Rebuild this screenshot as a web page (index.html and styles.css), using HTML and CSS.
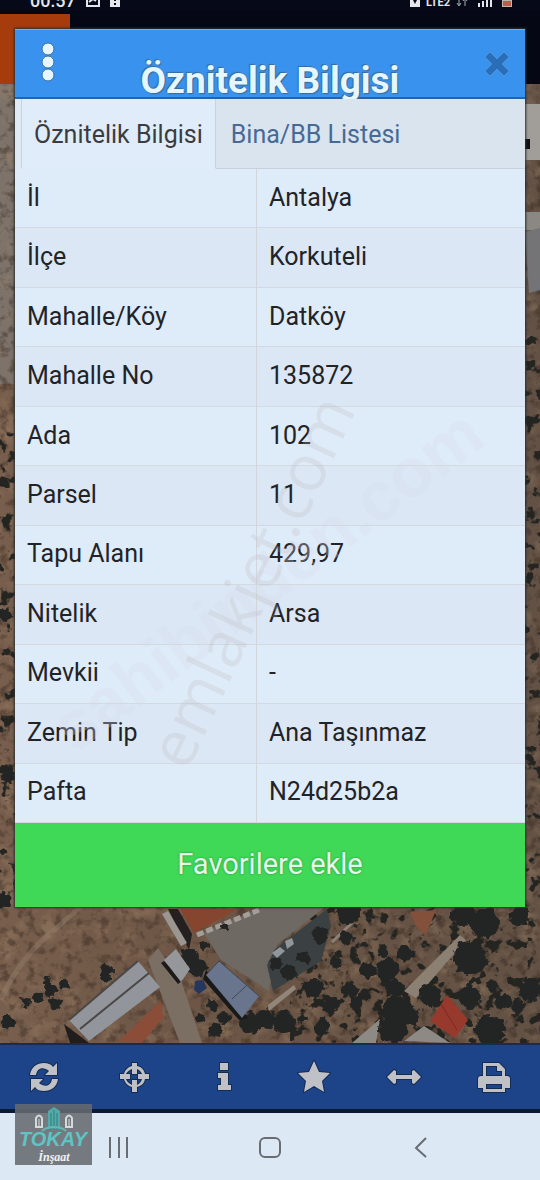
FILE: index.html
```html
<!DOCTYPE html>
<html lang="tr">
<head>
    <meta charset="UTF-8">
    <meta name="viewport" content="width=device-width, initial-scale=1">
    <title>Öznitelik Bilgisi</title>
    <link rel="stylesheet" href="styles.css">
</head>
<body>
    <div class="status-bar">
        <span class="clock">00:57</span>
        <svg class="status-icon" width="14" height="14" viewBox="0 0 14 14"><path d="M1 1h12v12H1zM3 9l4-3 3 2" fill="none" stroke="#e4e6ea" stroke-width="2"/></svg>
        <svg class="status-icon" width="10" height="14" viewBox="0 0 10 14"><path d="M0 0h10v14H0z" fill="#e4e6ea"/><path d="M4 3h2v5H4zM4 10h2v2H4z" fill="#060a18"/></svg>
        <span class="status-space"></span>
        <svg class="status-icon" width="10" height="14" viewBox="0 0 10 14"><path d="M0 0h10v14H0z" fill="#e4e6ea"/><path d="M3 7h4L5 11z" fill="#060a18"/></svg>
        <span class="network">LTE2</span>
        <svg class="status-icon" width="12" height="12" viewBox="0 0 12 12"><path d="M3 2v8M1 8l2 3 2-3M9 11V4M7 6l2-3 2 3" fill="none" stroke="#a9acb4"/></svg>
        <svg class="status-icon" width="14" height="12" viewBox="0 0 14 12"><path d="M1 8v4M5 6v6M9 3v9M13 0v12" stroke="#e4e6ea" stroke-width="2"/></svg>
        <svg class="status-icon" width="10" height="14" viewBox="0 0 10 14"><path d="M0 0h10v14H0z" fill="#c5b5b0"/><path d="M1 8h8v5H1z" fill="#b8614a"/></svg>
    </div>

    <main class="map">
        <svg class="map-image" viewBox="0 10 540 1033" preserveAspectRatio="xMidYMin slice" aria-hidden="true">
            <defs>
                <linearGradient id="soil" x1="0" x2="1">
                    <stop offset="0" stop-color="#785f4d"/>
                    <stop offset=".35" stop-color="#6d5646"/>
                    <stop offset="1" stop-color="#625144"/>
                </linearGradient>
                <filter id="grain" x="0" y="0" width="1" height="1" color-interpolation-filters="sRGB">
                    <feTurbulence type="fractalNoise" baseFrequency=".11" numOctaves="4" seed="8"/>
                    <feColorMatrix values="0 0 0 0 .18  0 0 0 0 .13  0 0 0 0 .1  4 0 0 0 -2"/>
                </filter>
                <filter id="light" x="0" y="0" width="1" height="1" color-interpolation-filters="sRGB">
                    <feTurbulence type="fractalNoise" baseFrequency=".05" numOctaves="4" seed="21"/>
                    <feColorMatrix values="0 0 0 0 .64  0 0 0 0 .53  0 0 0 0 .42  3 0 0 0 -1.5"/>
                </filter>
                <filter id="bushes" x="0" y="0" width="1" height="1" color-interpolation-filters="sRGB">
                    <feTurbulence type="fractalNoise" baseFrequency=".08" numOctaves="3" seed="5"/>
                    <feColorMatrix values="0 0 0 0 .14  0 0 0 0 .14  0 0 0 0 .13  12 0 0 0 -7"/>
                </filter>
                <filter id="ragged" color-interpolation-filters="sRGB">
                    <feTurbulence type="fractalNoise" baseFrequency=".15" numOctaves="2" seed="3"/>
                    <feDisplacementMap in="SourceGraphic" scale="9" xChannelSelector="R" yChannelSelector="G"/>
                </filter>
            </defs>
            <rect y="10" width="540" height="1033" fill="url(#soil)"/>
            <path d="M0 84h15v300H0z" fill="#7d736a"/>
            <rect y="84" width="540" height="959" filter="url(#light)" opacity=".4"/>
            <rect y="84" width="540" height="959" filter="url(#grain)" opacity=".4"/>
            <rect y="430" width="18" height="477" filter="url(#bushes)"/>
            <rect x="522" y="330" width="18" height="577" filter="url(#bushes)"/>
            <rect x="290" y="907" width="250" height="136" filter="url(#bushes)"/>
            <path d="M525 104h15v56h-15z" fill="#a19d99"/>
            <path d="M525 139h5v10h-5z" fill="#101114"/>
            <path d="M525 212h15v18h-15z" fill="#8b8782"/>
            <path d="M525 232l15-4v62l-11 3z" fill="#747476"/>

            <!-- roads and yards -->
            <path d="M0 1000q20-40 45-62t35-31" fill="none" stroke="#94806c" stroke-width="5" opacity=".45"/>
            <path d="M148 960l10-12 24 35 20 60h-22z" fill="#7b6f64"/>
            <path d="M203 932l60-25h62l-48 38-8 46-48-31z" fill="#6e6963"/>
            <path d="M327 909l-52 40-8 16 6 26 48-30 10-35z" fill="#3b4142"/>
            <path d="M404 991l56-56 6 5-50 58z" fill="#8b8072"/>
            <path d="M268 1005l26-20 2 4-27 22z" fill="#918679"/>
            <path d="M352 1043l28-24-4 24zM404 1041l20-15 26 17z" fill="#8d8985"/>
            <path d="M197 935l62-25" stroke="#a49e98" stroke-width="5" stroke-dasharray="7 3"/>
            <path d="M332 942l21-20" stroke="#8e8176" stroke-width="3"/>

            <!-- trees -->
            <g fill="#222524" filter="url(#ragged)">
                <circle cx="50" cy="990" r="7"/><circle cx="55" cy="1003" r="6"/><circle cx="26" cy="1002" r="5"/>
                <circle cx="38" cy="998" r="5"/><circle cx="8" cy="1023" r="7"/><circle cx="107" cy="970" r="6"/>
                <circle cx="47" cy="982" r="4"/><circle cx="64" cy="984" r="5"/><circle cx="106" cy="978" r="5"/>
                <circle cx="190" cy="957" r="9"/><circle cx="198" cy="968" r="9"/><circle cx="212" cy="1006" r="6"/>
                <circle cx="200" cy="1018" r="5"/><circle cx="224" cy="1018" r="6"/><circle cx="216" cy="1030" r="7"/>
                <circle cx="250" cy="1023" r="11"/><circle cx="266" cy="1019" r="10"/><circle cx="225" cy="927" r="4"/>
                <circle cx="205" cy="946" r="4"/><circle cx="284" cy="1022" r="11"/><circle cx="313" cy="988" r="10"/>
                <circle cx="331" cy="1004" r="9"/><circle cx="350" cy="990" r="8"/><circle cx="368" cy="971" r="8"/>
                <circle cx="388" cy="969" r="11"/><circle cx="405" cy="953" r="8"/><circle cx="383" cy="951" r="6"/>
                <circle cx="394" cy="988" r="9"/><circle cx="396" cy="1011" r="15"/><circle cx="393" cy="1030" r="14"/>
                <circle cx="409" cy="1015" r="10"/><circle cx="430" cy="995" r="11"/><circle cx="470" cy="958" r="17"/>
                <circle cx="469" cy="997" r="11"/><circle cx="484" cy="923" r="15"/><circle cx="462" cy="914" r="12"/>
                <circle cx="490" cy="1030" r="15"/><circle cx="520" cy="916" r="10"/><circle cx="530" cy="990" r="11"/>
                <circle cx="503" cy="1002" r="8"/><circle cx="518" cy="1006" r="7"/><circle cx="492" cy="987" r="6"/>
                <circle cx="348" cy="912" r="12"/><circle cx="322" cy="1027" r="8"/><circle cx="337" cy="963" r="6"/>
                <circle cx="289" cy="972" r="8"/><circle cx="275" cy="963" r="7"/><circle cx="304" cy="958" r="7"/>
                <circle cx="320" cy="935" r="8"/><circle cx="346" cy="938" r="7"/><circle cx="302" cy="1018" r="5"/>
                <circle cx="356" cy="1003" r="7"/><circle cx="365" cy="995" r="6"/>
                <circle cx="5" cy="615" r="7"/><circle cx="9" cy="775" r="7"/><circle cx="3" cy="900" r="7"/>
            </g>

            <!-- roofs -->
            <path d="M168 909h10l14 25-3 16z" fill="#24201f"/>
            <path d="M162 914l6-3 19 32-6 3z" fill="#9b9691"/>
            <path d="M180 909h58l-44 24z" fill="#86452f"/>
            <path d="M64 1024l25 19h-19z" fill="#211d1c"/>
            <path d="M69 1020l69-59 22 26-71 54z" fill="#92959b"/>
            <path d="M69 1020l69-59M80 1029l69-56" fill="none" stroke="#4b4744" stroke-width="2"/>
            <path d="M119 1041l42-40 2 17-21 25z" fill="#8c4d38"/>
            <path d="M161 963l17 21 5-4-19-19z" fill="#1c1a19"/>
            <path d="M164 960l12-11 14 20-9 13z" fill="#96979a"/>
            <path d="M203 979l36 41 9-2-42-48z" fill="#191919"/>
            <path d="M206 975l13-14 40 35-17 22z" fill="#69758c"/>
            <path d="M206 975l13-14 40 35M232 999l14-13" fill="none" stroke="#3e4758"/>
            <path d="M195 981l8-1 4 8-8 6-5-4z" fill="#26375d"/>
            <path d="M430 1021l17-26 21 25-13 18z" fill="#97392d"/>
            <path d="M441 1004l16 26" stroke="#792b24"/>
            <path d="M410 912l26-2-10 25-10-9z" fill="#83503b"/>
            <path d="M272 953l8-6 5 4-8 7zM285 941l7-3 2 6-7 5z" fill="#90969b"/>

            <path d="M0 10h540v74H0z" fill="#050814"/>
            <path d="M0 14h70v70H0z" fill="#a63c0b"/>
        </svg>

        <section class="dialog">
            <header class="dialog-header">
                <button class="menu-button" type="button" aria-label="Menü">
                    <svg width="14" height="40" viewBox="0 0 14 40"><g fill="#e6f6ff" stroke="#396f9f"><circle cx="7" cy="7" r="6"/><circle cx="7" cy="20" r="6"/><circle cx="7" cy="33" r="6"/></g></svg>
                </button>
                <h1>Öznitelik Bilgisi</h1>
                <button class="close-button" type="button" aria-label="Kapat">
                    <svg width="28" height="28" viewBox="0 0 28 28"><path d="M2 7l5-5 7 7 7-7 5 5-7 7 7 7-5 5-7-7-7 7-5-5 7-7z" fill="#2a6db9" stroke="#4e92d3" stroke-linejoin="round"/></svg>
                </button>
            </header>

            <div class="tabs">
                <button class="tab active" type="button">Öznitelik Bilgisi</button>
                <button class="tab" type="button">Bina/BB Listesi</button>
            </div>

            <table class="details">
                <tr><th scope="row">İl</th><td>Antalya</td></tr>
                <tr><th scope="row">İlçe</th><td>Korkuteli</td></tr>
                <tr><th scope="row">Mahalle/Köy</th><td>Datköy</td></tr>
                <tr><th scope="row">Mahalle No</th><td>135872</td></tr>
                <tr><th scope="row">Ada</th><td>102</td></tr>
                <tr><th scope="row">Parsel</th><td>11</td></tr>
                <tr><th scope="row">Tapu Alanı</th><td>429,97</td></tr>
                <tr><th scope="row">Nitelik</th><td>Arsa</td></tr>
                <tr><th scope="row">Mevkii</th><td>-</td></tr>
                <tr><th scope="row">Zemin Tip</th><td>Ana Taşınmaz</td></tr>
                <tr><th scope="row">Pafta</th><td>N24d25b2a</td></tr>
            </table>

            <button class="favorite-button" type="button">Favorilere ekle</button>

            <svg class="watermark" viewBox="0 0 510 878">
                <text class="mark-wide" transform="translate(266 570) rotate(-37)">sahibinden.com</text>
                <text class="mark-tall" transform="translate(257 562) rotate(-65)">emlakjet.com</text>
            </svg>
        </section>
    </main>

    <nav class="toolbar">
        <button type="button" aria-label="Yenile">
            <svg width="36" height="36" viewBox="0 0 36 36"><path d="M4 16C5 8 11 4 18 4c4 0 7 1 9 4l4-4v12H19l4-4c-6-5-12-3-13 4zM32 20c-1 8-7 12-14 12-4 0-7-1-9-4l-4 4V20h12l-4 4c6 5 12 3 13-4z"/></svg>
        </button>
        <button type="button" aria-label="Konum">
            <svg width="36" height="36" viewBox="0 0 36 36"><path fill-rule="evenodd" d="M16 4h5v3c5 1 7 4 8 8h4v5h-4c-1 5-4 7-8 8v5h-5v-5c-4-1-7-4-8-8H4v-5h4c1-4 4-7 8-8zM16 10c-3 1-5 3-6 5h4v5h-4c1 3 3 4 6 6v-5h5v5c3-2 4-3 5-6h-4v-5h4c-1-2-2-4-5-5v5h-5z"/></svg>
        </button>
        <button type="button" aria-label="Bilgi">
            <svg width="36" height="36" viewBox="0 0 36 36"><path d="M14 4h8v7h-8zM12 14h10v12h3v5H12v-5h3v-7h-3z"/></svg>
        </button>
        <button type="button" aria-label="Favoriler">
            <svg width="36" height="36" viewBox="0 0 36 36"><path d="M18 2l5 11 11 1-8 8 2 11-10-6-10 6 2-11-8-8 11-1z"/></svg>
        </button>
        <button type="button" aria-label="Ölç">
            <svg width="38" height="36" viewBox="0 0 38 36"><path d="M2 18l7-7 2 1v4h16v-4l2-1 7 7-7 7-2-1v-4H11v4l-2 1z"/></svg>
        </button>
        <button type="button" aria-label="Yazdır">
            <svg width="36" height="36" viewBox="0 0 36 36"><path fill-rule="evenodd" d="M7 4h16l6 6v7h2c2 0 3 1 3 3v9h-5v4H7v-4H2v-9c0-2 1-3 3-3h2zM10 7v10h16v-5h-5V7zM10 25v5h16v-5z"/></svg>
        </button>
    </nav>

    <nav class="system-nav">
        <button type="button" aria-label="Son uygulamalar">
            <svg width="24" height="24" viewBox="0 0 24 24"><path d="M3 2v21M12 2v21M20 2v21"/></svg>
        </button>
        <button type="button" aria-label="Ana ekran">
            <svg width="24" height="24" viewBox="0 0 24 24"><rect x="2" y="3" width="20" height="19" rx="5"/></svg>
        </button>
        <button type="button" aria-label="Geri">
            <svg width="24" height="24" viewBox="0 0 24 24"><path d="M17 3L7 13l10 9"/></svg>
        </button>
        <div class="agency-logo">
            <svg width="77" height="61" viewBox="0 0 77 61" role="img" aria-label="Tokay İnşaat">
                <path d="M33 25V7l6-4 6 4v18z" fill="#53aaa9"/>
                <path d="M36 9v16M39 6v19M42 9v16" stroke="#327c7e"/>
                <path d="M21 23v-9q3-5 6 0v9zM51 23v-9q3-5 6 0v9z" fill="none" stroke="#d4dada" stroke-width="2"/>
                <path d="M24 15v7M54 15v7" stroke="#d4dada"/>
                <path d="M27 27q4-4 12-4t12 4" fill="none" stroke="#65b6b4" stroke-width="2"/>
                <text class="logo-name" x="38" y="42">TOKAY</text>
                <text class="logo-sub" x="39" y="57">İnşaat</text>
            </svg>
        </div>
    </nav>
</body>
</html>
```
FILE: styles.css
```css
* {
    box-sizing: border-box;
}
body {
    margin: 0;
    min-height: 100vh;
    display: flex;
    flex-direction: column;
    font-family: Roboto, "Liberation Sans", sans-serif;
    background: #050814;
    color: #222327;
}
button {
    border: none;
    padding: 0;
    background: none;
    font: inherit;
    cursor: pointer;
}
svg {
    display: block;
}
.status-bar {
    height: 10px;
    padding: 0 28px 0 30px;
    display: flex;
    align-items: flex-end;
    gap: 10px;
    overflow: hidden;
    background: #060a18;
    color: #e4e6ea;
}
.status-icon {
    flex: none;
    margin-bottom: 3px;
}
.clock {
    font-size: 18px;
    line-height: 18px;
    font-weight: 500;
}
.network {
    font-size: 11px;
    line-height: 14px;
    font-weight: 700;
    margin: 0 -4px;
}
.status-space {
    flex: 1;
}
.map {
    position: relative;
    flex: 1;
    padding: 19px 15px 136px;
}
.map-image {
    position: absolute;
    inset: 0;
    width: 100%;
    height: 100%;
}
.dialog {
    position: relative;
    background: #deebf8;
    box-shadow: 0 0 2px 1px #2c3030;
}
.dialog-header {
    height: 70px;
    display: flex;
    align-items: flex-start;
    justify-content: space-between;
    background: #3993ee;
    border-top: 1px solid #75afe6;
    border-bottom: 2px solid #2c62a4;
}
.menu-button {
    padding: 12px 26px;
}
.close-button {
    padding: 20px 14px 20px 24px;
}
.dialog-header h1 {
    margin: 0;
    padding-top: 31px;
    font-size: 37px;
    line-height: 40px;
    font-weight: 700;
    white-space: nowrap;
    color: #e6f6ff;
    text-shadow: -1px -1px 1px #386b99, 1px 1px 1px #386b99;
}
.tabs {
    display: flex;
    height: 70px;
    padding-left: 6px;
    background: #dfe9f4;
}
.tab {
    padding: 2px 12px 0;
    font-size: 25px;
    line-height: 32px;
    color: #476a94;
    border-bottom: 1px solid #c7d0da;
}
.tab:last-child {
    flex: 1;
    padding-left: 15px;
    text-align: left;
    background: #d9e4ef;
}
.tab.active {
    color: #3b3c40;
    background: #e0ecfa;
    border: 1px solid #cbd2da;
    border-bottom-color: #e0ecfa;
    border-top: none;
}
.details {
    width: 100%;
    height: 654px;
    table-layout: fixed;
    border-collapse: separate;
    border-spacing: 0;
}
.details th,
.details td {
    padding: 0 12px 1px;
    font-size: 25px;
    line-height: 32px;
    font-weight: 400;
    text-align: left;
    vertical-align: middle;
    border-bottom: 1px solid #d2d9e0;
}
.details th {
    width: 242px;
    border-right: 1px solid #d2d6dc;
}
.details tr:nth-child(even) {
    background: #dbe7f5;
}
.favorite-button {
    width: 100%;
    height: 84px;
    padding-bottom: 2px;
    background: #3fd857;
    color: #e3fbe9;
    font-size: 29px;
    line-height: 32px;
    text-shadow: 0 0 2px #2b7d3b;
}
.watermark {
    position: absolute;
    inset: 0;
    width: 100%;
    height: 100%;
    pointer-events: none;
    text-anchor: middle;
}
.mark-wide {
    font: 700 68px "Liberation Sans", sans-serif;
    fill: rgba(214, 218, 234, 0.3);
}
.mark-tall {
    font: 400 64px "Open Sans", sans-serif;
    fill: rgba(190, 186, 190, 0.24);
}
.toolbar {
    position: relative;
    height: 70px;
    display: flex;
    align-items: center;
    background: #1d4489;
    border-top: 2px solid #152c54;
    border-bottom: 4px solid #0d1935;
}
.toolbar button {
    flex: 1;
    padding-right: 3px;
    display: flex;
    justify-content: center;
}
.toolbar svg {
    fill: #bfc1c6;
    stroke: #142b52;
    stroke-width: 2;
    paint-order: stroke;
    stroke-linejoin: round;
}
.system-nav {
    position: relative;
    height: 67px;
    padding: 0 44px;
    display: flex;
    align-items: center;
    background: #dce8f4;
}
.system-nav button {
    flex: 1;
    display: flex;
    justify-content: center;
}
.system-nav button svg {
    fill: none;
    stroke: #686d73;
    stroke-width: 2;
}
.agency-logo {
    position: absolute;
    left: 15px;
    top: -9px;
    background: rgba(102, 106, 112, 0.88);
}
.logo-name {
    font: italic 700 20px "Liberation Sans", sans-serif;
    fill: #5fc4c3;
    text-anchor: middle;
}
.logo-sub {
    font: italic 700 12px "Liberation Serif", serif;
    fill: #f0f2f3;
    text-anchor: middle;
}
```
